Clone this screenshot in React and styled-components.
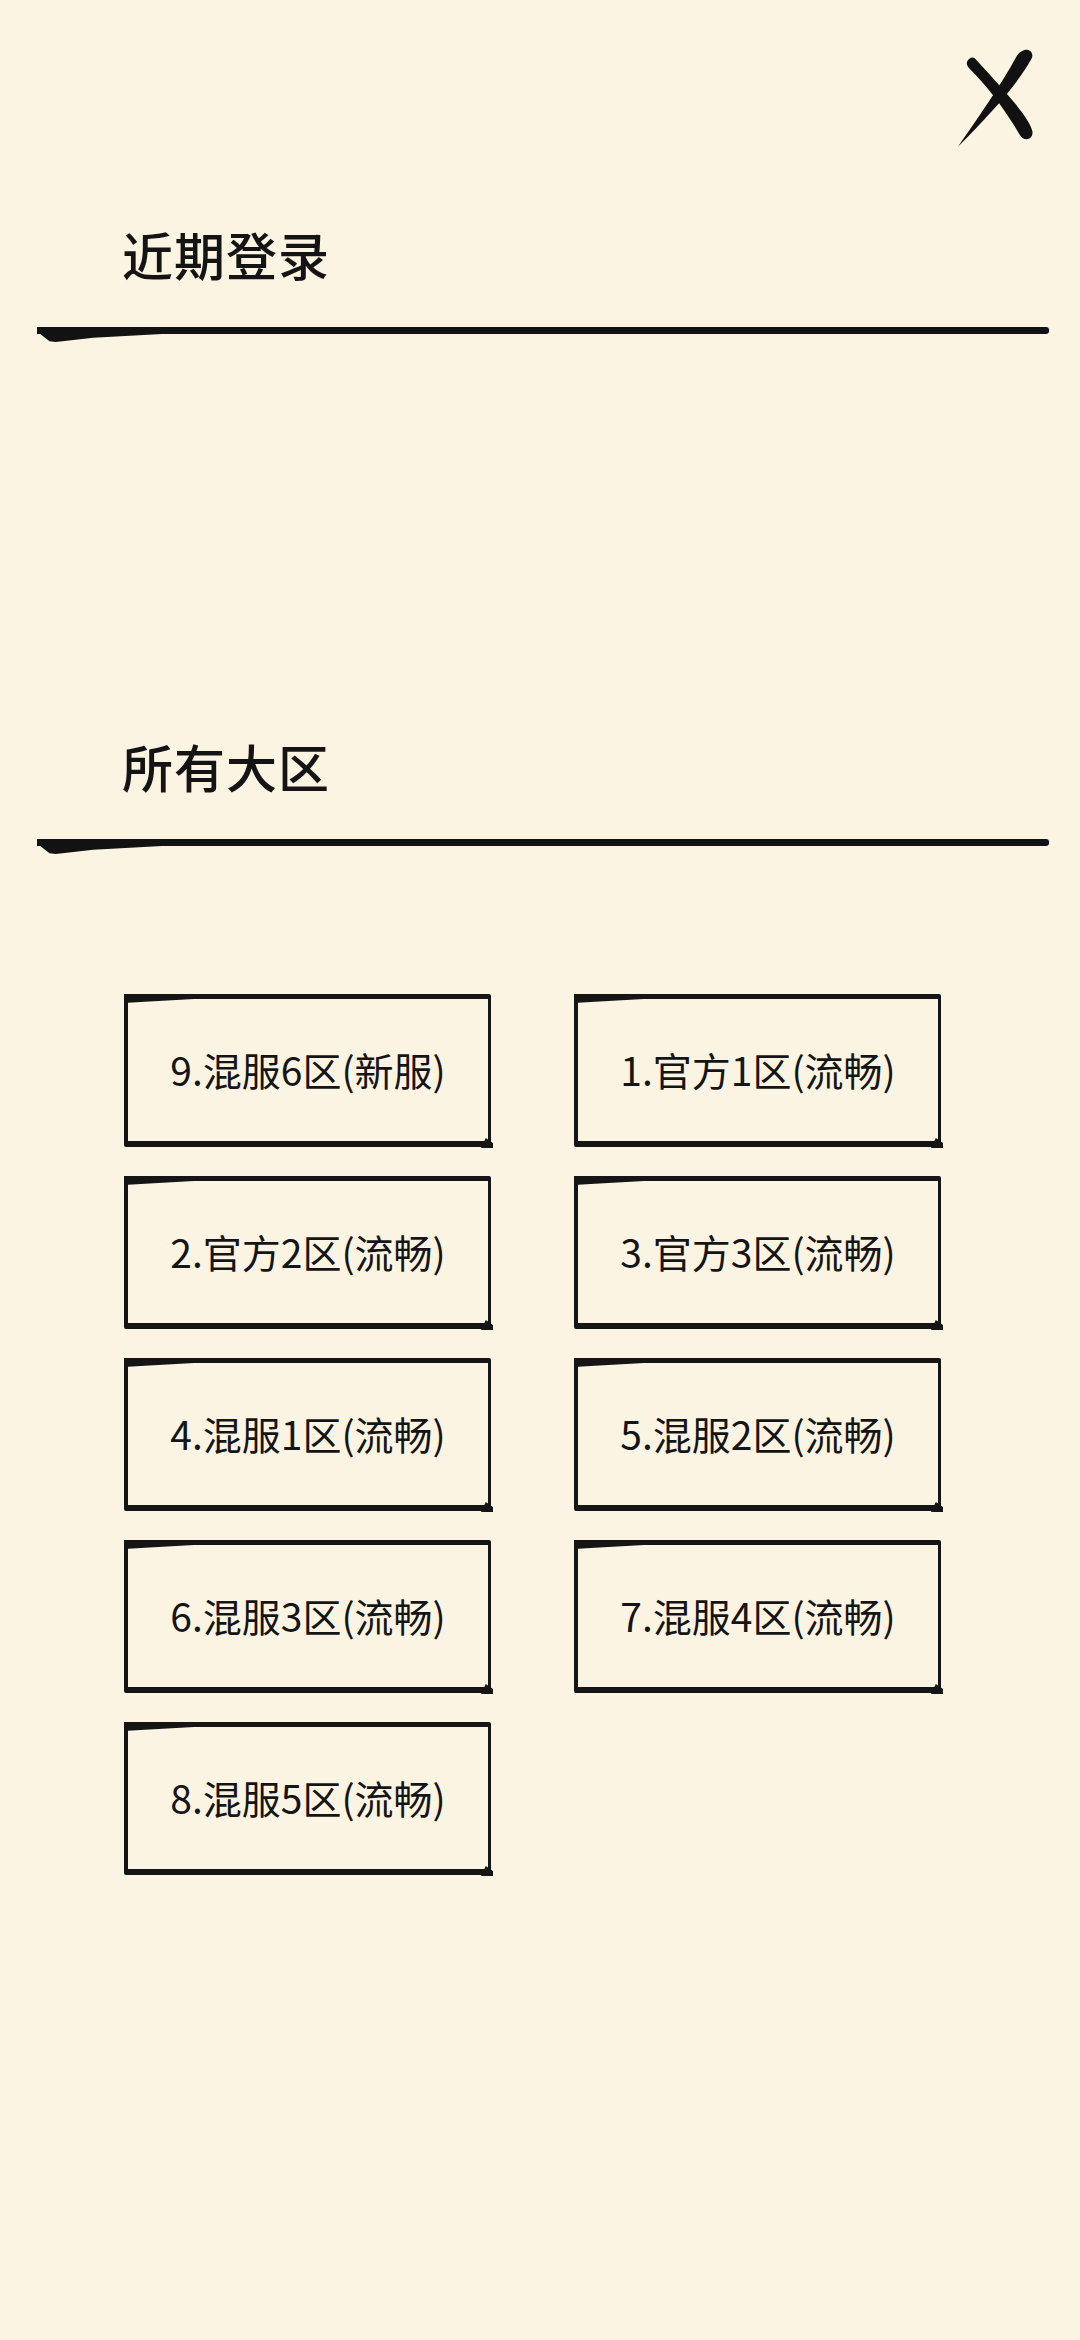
import React from 'react';
import styled, { createGlobalStyle } from 'styled-components';

const GlobalStyle = createGlobalStyle`
  html, body {
    margin: 0;
    padding: 0;
    background: #fcf4e3;
  }
  body {
    font-family: "Noto Sans CJK SC", "Noto Sans", sans-serif;
    color: #141414;
  }
`;

const Page = styled.div`
  width: 1080px;
  min-height: 2340px;
  background: #fcf4e3;
  display: flex;
  flex-direction: column;
`;

const CloseRow = styled.div`
  display: flex;
  justify-content: flex-end;
  padding: 46px 38px 0 0;
  height: 104px;
`;

const CloseButton = styled.button`
  width: 86px;
  height: 104px;
  padding: 0;
  border: none;
  background: transparent;
  cursor: pointer;
`;

const SectionTitle = styled.h2`
  margin: ${(p) => p.$top}px 0 0;
  padding-left: 122px;
  font-size: 51px;
  line-height: 60px;
  font-weight: 500;
  letter-spacing: 1px;
  color: #141414;
`;

const Divider = styled.div`
  position: relative;
  margin: 43px 31px 0 37px;
  height: 7px;
  background: #121212;
  border-radius: 0 3px 3px 0;

  &::before {
    content: '';
    position: absolute;
    left: 0;
    top: 0;
    width: 125px;
    height: 15px;
    background: #121212;
    clip-path: polygon(0 0, 100% 0, 100% 47%, 45% 72%, 15% 100%, 10% 95%, 0 30%);
  }
`;

const RecentArea = styled.div`
  height: 402px;
`;

const ServerGrid = styled.div`
  display: grid;
  grid-template-columns: 367px 367px;
  column-gap: 83px;
  row-gap: 29px;
  margin-top: 148px;
  padding-left: 124px;
`;

const ServerButton = styled.button`
  position: relative;
  height: 153px;
  box-sizing: border-box;
  background: transparent;
  border: 5px solid #151515;
  border-bottom-width: 6px;
  border-right-width: 3px;
  border-left-width: 4px;
  border-radius: 2px;
  font-family: "Noto Sans CJK SC", "Noto Sans", sans-serif;
  font-size: 39px;
  font-weight: 400;
  color: #151515;
  display: flex;
  align-items: center;
  justify-content: center;
  padding: 0 0 2px;
  cursor: pointer;

  &::before {
    content: '';
    position: absolute;
    left: -4px;
    top: -5px;
    width: 70px;
    height: 9px;
    background: #151515;
    clip-path: polygon(0 0, 100% 0, 100% 55%, 30% 85%, 0 100%);
  }

  &::after {
    content: '';
    position: absolute;
    right: -5px;
    bottom: -7px;
    width: 12px;
    height: 10px;
    background: #151515;
    clip-path: polygon(40% 0, 100% 50%, 100% 100%, 0 100%);
  }
`;

const servers = [
  '9.混服6区(新服)',
  '1.官方1区(流畅)',
  '2.官方2区(流畅)',
  '3.官方3区(流畅)',
  '4.混服1区(流畅)',
  '5.混服2区(流畅)',
  '6.混服3区(流畅)',
  '7.混服4区(流畅)',
  '8.混服5区(流畅)',
];

const BrushX = () => (
  <svg width="86" height="104" viewBox="0 0 90 106">
    {/* stroke from top-left to bottom-right */}
    <path
      d="M14 12 C10 15 11 19 14 22 C30 38 50 62 67 92 C71 99 81 97 80 88 C77 74 55 50 21 13 C19 10 16 10 14 12 Z"
      fill="#111"
    />
    {/* stroke from top-right to bottom-left, tapering */}
    <path
      d="M71 3 C77 1 82 6 79 12 C66 36 40 66 2 104 C24 72 48 38 63 10 C65 6 68 4 71 3 Z"
      fill="#111"
    />
  </svg>
);

export default function App() {
  return (
    <Page>
      <GlobalStyle />
      <CloseRow>
        <CloseButton aria-label="关闭">
          <BrushX />
        </CloseButton>
      </CloseRow>
      <SectionTitle $top={74}>近期登录</SectionTitle>
      <Divider />
      <RecentArea />
      <SectionTitle $top={0}>所有大区</SectionTitle>
      <Divider />
      <ServerGrid>
        {servers.map((s) => (
          <ServerButton key={s}>{s}</ServerButton>
        ))}
      </ServerGrid>
    </Page>
  );
}
